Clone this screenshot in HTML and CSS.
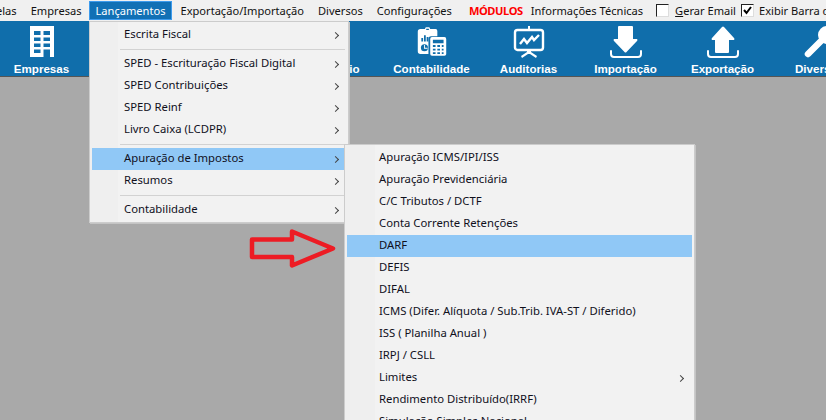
FILE: index.html
```html
<!DOCTYPE html>
<html lang="pt-BR">
<head>
<meta charset="utf-8">
<title>Lançamentos</title>
<link rel="stylesheet" href="styles.css">
</head>
<body>
<div class="app">
  <nav class="menubar">
    <span class="mi clip-first">elas</span>
    <span class="mi">Empresas</span>
    <span class="mi active">Lançamentos</span>
    <span class="mi">Exportação/Importação</span>
    <span class="mi">Diversos</span>
    <span class="mi">Configurações</span>
    <span class="mi red">MÓDULOS</span>
    <span class="mi">Informações Técnicas</span>
    <span class="check first"></span>
    <span class="chk-label"><u>G</u>erar Email</span>
    <span class="check on"><svg viewBox="0 0 11 11" width="11" height="11"><path d="M2 5l2.500 3L9 2" fill="none" stroke="#000" stroke-width="2"/></svg></span>
    <span class="chk-label">Exibir Barra de Ferramentas</span>
  </nav>
  <div class="toolbar">
    <div class="tool t-emp"><svg class="ico" viewBox="-4 0 32 32" width="32" height="32"><path fill="#fff" d="M0 0h24v31H0z"/><path fill="#106eab" d="M4 5h6.500v4H4zM13.500 5H20v4h-6.500zM4 11.500h6.500v3.500H4zM13.500 11.500H20v3.500h-6.500zM4 17.500h6.500v3.500H4zM13.500 17.500H20v3.500h-6.500zM4 23.500h6.500v3.500H4zM13.500 23.500H20V31h-6.500z"/></svg><span>Empresas</span></div>
    <div class="tool t-rel"><span class="ico-space"></span><span>Relatório</span></div>
    <div class="tool"><svg class="ico" viewBox="-2 -1.500 36 36" width="32" height="32"><path fill="#fff" d="M3 2h5l1-2h4l1 2h6q2 0 2 2v6h-7q-3 0-3 3v17H3q-3 0-3-3V5q0-3 3-3z"/><path fill="#106eab" d="M9.500 1.500h3v1.500h-3zM4 12h2v4H4zM7 9h2v7H7zM10 11h2v5h-2z"/><circle cx="7.500" cy="23" r="4" fill="#106eab"/><path fill="#fff" d="M7 20h1v3h3v1H7z"/><path fill="#fff" d="M16 11h14q2 0 2 2v17q0 2-2 2H16q-2 0-2-2V13q0-2 2-2z"/><path fill="#106eab" d="M17 14h12v4H17zM17 20h3v2h-3zM22 20h3v2h-3zM27 20h2v2h-2zM17 24h3v2h-3zM22 24h3v2h-3zM27 24h2v2h-2zM17 28h3v2h-3zM22 28h3v2h-3zM27 28h2v2h-2z"/></svg><span>Contabilidade</span></div>
    <div class="tool"><svg class="ico" viewBox="0 0 32 32" width="32" height="32"><path fill="#fff" d="M15 0h2v3h-2z"/><rect x="2" y="4" width="28" height="20" rx="2.500" fill="none" stroke="#fff" stroke-width="2.400"/><path fill="none" stroke="#fff" stroke-width="2.400" d="M7 18l4-5 3 4 5-6 2 3 5-5"/><path fill="#fff" d="M14 24h4v2l6 4-1 2-6-4h-2l-6 4-1-2 6-4z"/></svg><span>Auditorias</span></div>
    <div class="tool"><svg class="ico" viewBox="0 0 32 32" width="32" height="32"><path fill="#fff" d="M9 0h13q1 0 1 1v12h4q1 1 0 2L16.500 26q-1 1-2 0L4 15q-1-1 0-2h4V1q0-1 1-1z"/><path fill="none" stroke="#fff" stroke-width="2" stroke-linecap="round" d="M1 25v3q0 3 3 3h24q3 0 3-3v-3"/></svg><span>Importação</span></div>
    <div class="tool"><svg class="ico" viewBox="0 0 32 32" width="32" height="32"><path fill="#fff" d="M15 1q1-1 2 0l10 11q1 1 0 2h-5v12q0 1-1 1H9q-1 0-1-1V14H5q-1-1 0-2z"/><path fill="none" stroke="#fff" stroke-width="2" stroke-linecap="round" d="M1 25v3q0 3 3 3h24q3 0 3-3v-3"/></svg><span>Exportação</span></div>
    <div class="tool"><svg class="ico" viewBox="0 0 32 32" width="32" height="32"><path fill="none" stroke="#fff" stroke-width="6.500" stroke-linecap="round" d="M4 28L17 15"/><circle cx="23" cy="9" r="9" fill="#fff"/></svg><span>Diversos</span></div>
  </div>
  <main class="workspace"></main>

  <div class="menu menu-main">
    <div class="row"><span>Escrita Fiscal</span><i class="arrow"></i></div>
    <div class="sep"></div>
    <div class="row"><span>SPED - Escrituração Fiscal Digital</span><i class="arrow"></i></div>
    <div class="row"><span>SPED Contribuições</span><i class="arrow"></i></div>
    <div class="row"><span>SPED Reinf</span><i class="arrow"></i></div>
    <div class="row"><span>Livro Caixa (LCDPR)</span><i class="arrow"></i></div>
    <div class="sep"></div>
    <div class="row hot"><span>Apuração de Impostos</span><i class="arrow"></i></div>
    <div class="row"><span>Resumos</span><i class="arrow"></i></div>
    <div class="sep"></div>
    <div class="row"><span>Contabilidade</span><i class="arrow"></i></div>
  </div>

  <div class="menu menu-sub">
    <div class="row"><span>Apuração ICMS/IPI/ISS</span></div>
    <div class="row"><span>Apuração Previdenciária</span></div>
    <div class="row"><span>C/C Tributos / DCTF</span></div>
    <div class="row"><span>Conta Corrente Retenções</span></div>
    <div class="row hot"><span>DARF</span></div>
    <div class="row"><span>DEFIS</span></div>
    <div class="row"><span>DIFAL</span></div>
    <div class="row"><span>ICMS (Difer. Alíquota / Sub.Trib. IVA-ST / Diferido)</span></div>
    <div class="row"><span>ISS ( Planilha Anual )</span></div>
    <div class="row"><span>IRPJ / CSLL</span></div>
    <div class="row"><span>Limites</span><i class="arrow"></i></div>
    <div class="row"><span>Rendimento Distribuído(IRRF)</span></div>
    <div class="row"><span>Simulação Simples Nacional</span></div>
  </div>

  <svg class="callout" viewBox="0 0 88 42" width="88" height="42"><path d="M3 11.500h40V3.500l41 17-41 17V29H3z" fill="none" stroke="#ed1c24" stroke-width="4.500" stroke-linejoin="round"/></svg>
</div>
</body>
</html>
```
FILE: styles.css
```css
* { box-sizing: border-box; }
html, body { margin: 0; padding: 0; }
body { width: 826px; height: 420px; overflow: hidden; font-family: "Noto Sans", "Open Sans", sans-serif; font-size: 11.3px; color: #000; }
.app { position: relative; width: 826px; height: 420px; overflow: hidden; display: flex; flex-direction: column; background: #a9a9a9; }
.menubar { height: 21px; flex: none; display: flex; align-items: center; background: #f0f0f0; white-space: nowrap; color: #111; font-size: 11.1px; }
.mi { padding: 0 7px; height: 19px; line-height: 19px; flex: none; }
.clip-first { margin-left: -11px; }
.active { background: #1170b5; color: #fff; outline: 1px solid #3d9bed; outline-offset: -1px; margin-right: 1px; }
.red { color: #f00; font-weight: 700; letter-spacing: -0.4px; padding-right: 1px; margin-left: 3px; }
.check { width: 13px; height: 13px; background: #fff; border: 1px solid; border-color: #222 #ddd #ddd #222; margin-right: 6px; flex: none; display: flex; }
.check.first { margin-left: 6px; }
.check.on { margin-right: 5px; }
.chk-label { margin-right: 5px; flex: none; }
.toolbar { height: 56px; flex: none; background: #106eab; border-bottom: 1px solid #555; display: flex; }
.tool { display: flex; flex-direction: column; align-items: center; color: #fff; font-family: "Liberation Sans", Arial, sans-serif; font-weight: 700; font-size: 11.6px; width: 97px; flex: none; }
.tool span { line-height: 14px; margin-top: 4px; white-space: nowrap; }
.tool .ico-space { display: block; height: 32px; margin-top: 5px; }
.ico { margin-top: 5px; display: block; flex: none; }
.t-emp { margin-left: -7px; }
.t-rel { margin-left: 196px; }
.workspace { flex: 1; background: #a9a9a9; }
.menu { position: absolute; background: #f2f2f2; border: 1px solid #ccc; box-shadow: 1px 1px 0 #c4c4c4; padding: 2px; }
.menu-main { left: 89px; top: 21px; width: 260px; height: 202px; background-image: linear-gradient(to right, #efefef 28px, #f2f2f2 28px); }
.menu-sub { left: 344px; top: 144px; width: 351px; height: 300px; background-image: linear-gradient(to right, #efefef 30px, #f2f2f2 30px); }
.row { height: 22px; display: flex; align-items: center; justify-content: space-between; padding: 0 9px 2px 32px; line-height: 20px; white-space: nowrap; color: #10101c; }
.row .arrow { margin-top: 2px; }
.menu-main .row { padding-right: 8px; }
.hot { background: #90c8f6; }
.sep { height: 1px; background: #d2d2d2; margin: 3px 1px 3px 28px; }
.arrow { width: 5px; height: 5px; border: solid #444; border-width: 1px 1px 0 0; transform: rotate(45deg); }
.callout { position: absolute; left: 249px; top: 228px; }
```
